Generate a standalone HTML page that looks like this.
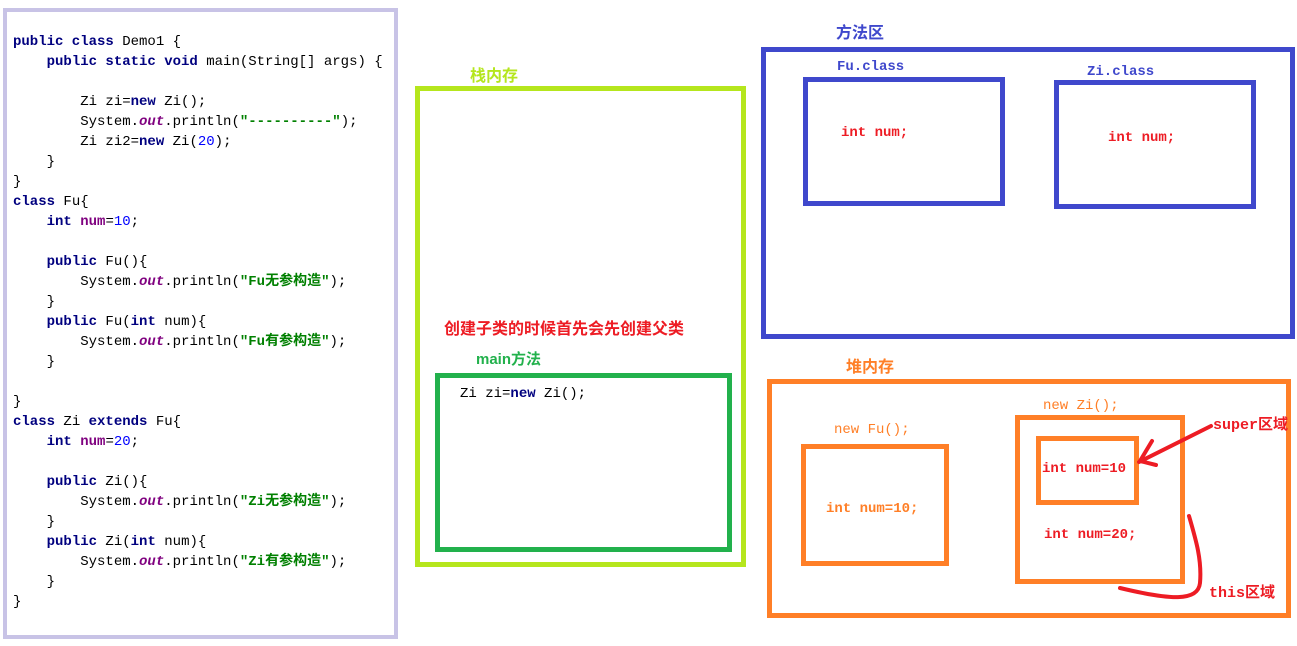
<!DOCTYPE html>
<html><head><meta charset="utf-8"><style>
body{margin:0;width:1297px;height:646px;background:#fff;position:relative;overflow:hidden;font-family:"Liberation Mono","Noto Sans CJK SC",monospace;}
.b{position:absolute;box-sizing:border-box;}
.t{position:absolute;white-space:pre;font-size:14px;line-height:20px;}
.k{color:#00007f;font-weight:bold}
.f{color:#7f007f;font-weight:bold}
.o{color:#7f007f;font-weight:bold;font-style:italic}
.s{color:#008000;font-weight:bold}
.n{color:#0000ff}
.cn{font-family:"Liberation Sans","Noto Sans CJK SC",sans-serif;font-weight:bold;}
</style></head><body>
<div class="b" style="left:3px;top:8px;width:395px;height:631px;border:4px solid #c8c3e6"></div>
<div class="t" style="left:13px;top:32px;color:#000"><span class="k">public class</span> Demo1 {
    <span class="k">public static void</span> main(String[] args) {

        Zi zi=<span class="k">new</span> Zi();
        System.<span class="o">out</span>.println(<span class="s">"----------"</span>);
        Zi zi2=<span class="k">new</span> Zi(<span class="n">20</span>);
    }
}
<span class="k">class</span> Fu{
    <span class="k">int</span> <span class="f">num</span>=<span class="n">10</span>;

    <span class="k">public</span> Fu(){
        System.<span class="o">out</span>.println(<span class="s">"Fu无参构造"</span>);
    }
    <span class="k">public</span> Fu(<span class="k">int</span> num){
        System.<span class="o">out</span>.println(<span class="s">"Fu有参构造"</span>);
    }

}
<span class="k">class</span> Zi <span class="k">extends</span> Fu{
    <span class="k">int</span> <span class="f">num</span>=<span class="n">20</span>;

    <span class="k">public</span> Zi(){
        System.<span class="o">out</span>.println(<span class="s">"Zi无参构造"</span>);
    }
    <span class="k">public</span> Zi(<span class="k">int</span> num){
        System.<span class="o">out</span>.println(<span class="s">"Zi有参构造"</span>);
    }
}</div>

<div class="t cn" style="left:470px;top:67px;color:#b5e61d;font-size:16px">栈内存</div>
<div class="b" style="left:415px;top:86px;width:331px;height:481px;border:5px solid #b5e61d"></div>
<div class="t cn" style="left:444px;top:320px;color:#ed1c24;font-size:16px">创建子类的时候首先会先创建父类</div>
<div class="t cn" style="left:476px;top:350px;color:#22b14c;font-size:15px">main方法</div>
<div class="b" style="left:435px;top:373px;width:297px;height:179px;border:5px solid #22b14c"></div>
<div class="t" style="left:460px;top:384px;color:#000">Zi zi=<span class="k">new</span> Zi();</div>

<div class="t cn" style="left:836px;top:24px;color:#3f48cc;font-size:16px">方法区</div>
<div class="b" style="left:761px;top:47px;width:534px;height:292px;border:5px solid #3f48cc"></div>
<div class="t" style="left:837px;top:57px;color:#3f48cc;font-weight:bold">Fu.class</div>
<div class="b" style="left:803px;top:77px;width:202px;height:129px;border:5px solid #3f48cc"></div>
<div class="t" style="left:841px;top:123px;color:#ed1c24;font-weight:bold">int num;</div>
<div class="t" style="left:1087px;top:62px;color:#3f48cc;font-weight:bold">Zi.class</div>
<div class="b" style="left:1054px;top:80px;width:202px;height:129px;border:5px solid #3f48cc"></div>
<div class="t" style="left:1108px;top:128px;color:#ed1c24;font-weight:bold">int num;</div>

<div class="t cn" style="left:846px;top:358px;color:#ff7f27;font-size:16px">堆内存</div>
<div class="b" style="left:767px;top:379px;width:524px;height:239px;border:5px solid #ff7f27"></div>
<div class="t" style="left:834px;top:420px;color:#ff7f27">new Fu();</div>
<div class="b" style="left:801px;top:444px;width:148px;height:122px;border:5px solid #ff7f27"></div>
<div class="t" style="left:826px;top:499px;color:#ff7f27;font-weight:bold">int num=10;</div>
<div class="t" style="left:1043px;top:396px;color:#ff7f27">new Zi();</div>
<div class="b" style="left:1015px;top:415px;width:170px;height:169px;border:5px solid #ff7f27"></div>
<div class="b" style="left:1036px;top:436px;width:103px;height:69px;border:5px solid #ff7f27"></div>
<div class="t" style="left:1042px;top:459px;color:#ed1c24;font-weight:bold">int num=10</div>
<div class="t" style="left:1044px;top:525px;color:#ed1c24;font-weight:bold">int num=20;</div>
<div class="t" style="left:1213px;top:415px;color:#ed1c24;font-size:15px;font-weight:bold">super<span class="cn">区域</span></div>
<div class="t" style="left:1209px;top:583px;color:#ed1c24;font-size:15px;font-weight:bold">this<span class="cn">区域</span></div>
<svg class="b" style="left:0;top:0" width="1297" height="646">
<g stroke="#ed1c24" stroke-width="4" fill="none" stroke-linecap="round">
<path d="M1211 426 L1139 462"/>
<path d="M1140 461 L1152 441 M1140 461 L1156 465"/>
<path d="M1189 516 C1196 540 1202 560 1200 583 C1198 602 1170 600 1120 588"/>
</g></svg>
</body></html>
